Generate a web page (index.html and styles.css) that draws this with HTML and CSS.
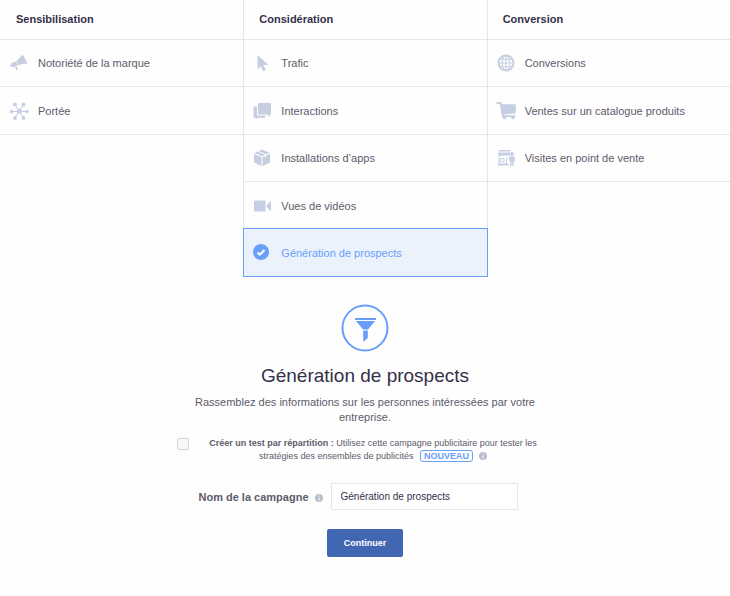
FILE: index.html
```html
<!DOCTYPE html>
<html lang="fr">
<head>
    <meta charset="UTF-8">
    <meta name="viewport" content="width=device-width, initial-scale=1.0">
    <title>Génération de prospects</title>
    <link rel="stylesheet" href="styles.css">
</head>
<body>

    <!-- Objectifs -->
    <div class="objectives">
        <div class="column">
            <h2>Sensibilisation</h2>
            <button type="button" class="objective">
                <svg class="icon" viewBox="0 0 20 20"><path d="M12.500 2.500q1-1 1.800.2l4 7q.5 1-.8 1.100-4-.2-7.500 1.400L7.600 7.800q3-2 4.900-5.300z"/><path d="M7.300 8.200 9.500 12.100l-4.800 2.200-1.400-.7-1.500.4-.8-1.500 1.200-1-.1-1.300zM5.800 14.600l2-.9.500 1.200.6.200-.1 1.600-1.200.4z"/></svg>
                Notoriété de la marque
            </button>
            <button type="button" class="objective">
                <svg class="icon" viewBox="0 0 20 20"><path class="spokes" d="M2.500 10.500h16M6 3.500l8.500 13.500M14.500 3.500l-8.500 13.500"/><circle cx="10.300" cy="10.300" r="2.500"/><circle cx="2.500" cy="10.500" r="1.800"/><circle cx="18" cy="10.500" r="1.800"/><circle cx="6" cy="3.500" r="1.900"/><circle cx="14.500" cy="3.500" r="1.900"/><circle cx="6" cy="17" r="1.900"/><circle cx="14.500" cy="17" r="1.900"/></svg>
                Portée
            </button>
        </div>

        <div class="column">
            <h2>Considération</h2>
            <button type="button" class="objective">
                <svg class="icon" viewBox="0 0 20 20"><path d="M5.500 2v14.500l3.300-3.200 2.500 4.900 2.600-1.200-2.500-4.800 4.700-.7z"/></svg>
                Trafic
            </button>
            <button type="button" class="objective">
                <svg class="icon" viewBox="0 0 20 20"><path d="M7 2h11q1 0 1 1v9.500q0 1-1 1v2.500l-3-2.500H7q-1 0-1-1V3q0-1 1-1z"/><path d="M2.500 5.500H5v8q0 1 1 1h7.500v1.200q0 1-1 1H6l-2.300 1.800v-1.800H2.500q-1 0-1-1V6.500q0-1 1-1z"/></svg>
                Interactions
            </button>
            <button type="button" class="objective">
                <svg class="icon" viewBox="0 0 20 20"><path d="m10 1.500 7.500 3.300L10 8.200 2.500 4.800zM2 5.800l7.500 3.400v9L2 14.500zM18 5.800v8.700l-7.500 3.700v-9z"/><path class="cut" d="m6 3.200 7.500 3.500v3"/></svg>
                Installations d’apps
            </button>
            <button type="button" class="objective">
                <svg class="icon" viewBox="0 0 20 20"><rect x="2" y="4.500" width="11.500" height="11" rx="1"/><path d="m14 10 4.500-5q.5 0 .5.500v9q0 .5-.5.500z"/></svg>
                Vues de vidéos
            </button>
            <button type="button" class="objective selected">
                <svg class="icon" viewBox="0 0 20 20"><circle cx="9" cy="9" r="8"/><path class="check" d="m5.500 9.500 2.300 2.200L12.500 7"/></svg>
                Génération de prospects
            </button>
        </div>

        <div class="column">
            <h2>Conversion</h2>
            <button type="button" class="objective">
                <svg class="icon" viewBox="0 0 20 20"><circle class="line" cx="10" cy="10" r="7.500"/><ellipse class="thin" cx="10" cy="10" rx="3.700" ry="7.500"/><path class="thin" d="M10 2.500v15M2.500 10h15M3.500 6.300h13M3.500 13.700h13"/></svg>
                Conversions
            </button>
            <button type="button" class="objective">
                <svg class="icon" viewBox="0 0 20 20"><path d="M.5 1H5l1 2.300h13.800v8.200q0 .8-.8.900L8 13.500v.8h11.300V16H6L3.800 3H.5z"/><circle cx="8.500" cy="16.300" r="1.900"/><circle cx="17" cy="16.300" r="1.900"/></svg>
                Ventes sur un catalogue produits
            </button>
            <button type="button" class="objective">
                <svg class="icon" viewBox="0 0 20 20"><path d="M3 2h11v1.500H3zM2 4.500h12V7l-1 1.200L11.500 7 10 8.200 8.500 7 7 8.200 5.500 7 4 8.200 2 7z"/><path class="thin" d="M3 8v9M4.500 10.500H8v3.500H4.500zM10.500 17v-6.500h2"/><path d="M2 15.500h10.500v2H2z"/><circle cx="16" cy="6" r="1.900"/><path d="M13.200 8.500h5.600V13h-1v5h-1.500v-4h-.6v4h-1.500v-5h-1z"/></svg>
                Visites en point de vente
            </button>
        </div>
    </div>

    <!-- Objectif choisi -->
    <form class="details">
        <svg class="funnel" viewBox="0 0 48 48"><circle cx="24" cy="24" r="22.500"/><path d="M14 14h21v2H14zM15 17h19l-7 8.500H22zM22.200 26.500h4.600V34l-4.600 4z"/></svg>
        <h1>Génération de prospects</h1>
        <p class="description">Rassemblez des informations sur les personnes intéressées par votre entreprise.</p>

        <div class="split-test">
            <input type="checkbox" id="splitTest">
            <label for="splitTest"><b>Créer un test par répartition :</b> Utilisez cette campagne publicitaire pour tester les stratégies des ensembles de publicités <span class="badge">NOUVEAU</span><svg class="info" viewBox="0 0 8 8"><circle cx="4" cy="4" r="4"/><path d="M4 1.500v1M4 3.500v3"/></svg></label>
        </div>

        <div class="campaign">
            <label for="campaignName">Nom de la campagne<svg class="info" viewBox="0 0 8 8"><circle cx="4" cy="4" r="4"/><path d="M4 1.500v1M4 3.500v3"/></svg></label>
            <input type="text" id="campaignName" value="Génération de prospects">
        </div>

        <button type="button" class="continue">Continuer</button>
    </form>

</body>
</html>
```
FILE: styles.css
```css
* {
    box-sizing: border-box;
}
body {
    margin: 0;
    background: #fefefe;
    color: #5d5b6b;
    font-family: "Liberation Sans", Arial, sans-serif;
    font-size: 11px;
}
button,
input {
    font-family: inherit;
    font-size: inherit;
}
.objectives {
    display: grid;
    grid-template-columns: repeat(3, 1fr);
}
.column + .column {
    border-left: 1px solid #e3e6ea;
}
.column h2 {
    height: 40px;
    margin: 0;
    padding: 0 16px;
    border-bottom: 1px solid #e3e6ea;
    color: #35304a;
    font-size: 11px;
    line-height: 39px;
}
.column + .column h2 {
    padding-left: 15px;
}
.objective {
    display: flex;
    align-items: center;
    gap: 9px;
    width: 100%;
    height: 47px;
    padding: 0 9px;
    background: none;
    border: none;
    border-bottom: 1px solid #e3e6ea;
    color: #5d5b6b;
    cursor: pointer;
}
.objective:nth-of-type(even) {
    height: 48px;
}
.column + .column .objective {
    padding-left: 8px;
}
.icon {
    width: 20px;
    height: 20px;
    fill: #c5cfe1;
}
.icon .line {
    fill: none;
    stroke: #c5cfe1;
    stroke-width: 2;
}
.icon .spokes {
    stroke: #c5cfe1;
    stroke-width: 1;
}
.icon .thin {
    fill: none;
    stroke: #c5cfe1;
    stroke-width: 1;
}
.icon .cut {
    fill: none;
    stroke: #fefefe;
    stroke-width: 1;
}
.column .objective.selected {
    position: relative;
    width: calc(100% + 2px);
    height: 49px;
    margin: -2px -1px -1px;
    background: #ebf2fb;
    border: 1px solid #699ffb;
    color: #699ffb;
}
.selected .icon {
    fill: #699ffb;
}
.selected .check {
    fill: none;
    stroke: white;
    stroke-width: 2;
}

.details {
    display: flex;
    flex-direction: column;
    align-items: center;
    padding: 28px 16px 40px;
}
.funnel {
    width: 48px;
    height: 48px;
    fill: #699ffb;
}
.funnel circle {
    fill: none;
    stroke: #699ffb;
    stroke-width: 2;
}
.details h1 {
    margin: 12px 0 7px;
    color: #35304a;
    font-size: 19px;
    font-weight: normal;
    line-height: 24px;
}
.description {
    max-width: 360px;
    margin: 0;
    line-height: 15px;
    text-align: center;
}
.split-test {
    display: flex;
    gap: 12px;
    margin-top: 12px;
    padding-right: 8px;
    font-size: 9px;
    line-height: 13px;
    text-align: center;
}
.split-test label {
    max-width: 344px;
}
.split-test input {
    appearance: none;
    flex: none;
    width: 12px;
    height: 12px;
    margin: 1px 0;
    background: #f8f8f8;
    border: 1px solid #d3d6db;
    border-radius: 2px;
}
.split-test input:checked {
    background: #699ffb;
}
.badge {
    display: inline-block;
    margin-left: 4px;
    padding: 0 3px;
    border: 1px solid #699ffb;
    border-radius: 3px;
    color: #699ffb;
    font-size: 9px;
    font-weight: bold;
    line-height: 10px;
}
.info {
    width: 8px;
    height: 8px;
    margin-left: 6px;
    fill: #b9bfca;
    stroke: white;
    vertical-align: -1px;
}
.info circle {
    stroke: none;
}
.campaign {
    display: flex;
    align-items: center;
    gap: 8px;
    margin: 20px 0 19px;
    padding-right: 14px;
}
.campaign label {
    font-weight: bold;
}
.campaign input {
    width: 187px;
    height: 27px;
    padding: 0 9px;
    background: white;
    border: 1px solid #e3e6ea;
    color: #35304a;
    font-size: 10px;
}
.continue {
    height: 28px;
    padding: 0 17px;
    background: #4267b2;
    border: none;
    border-radius: 2px;
    color: white;
    font-size: 9px;
    font-weight: bold;
    cursor: pointer;
}
```
